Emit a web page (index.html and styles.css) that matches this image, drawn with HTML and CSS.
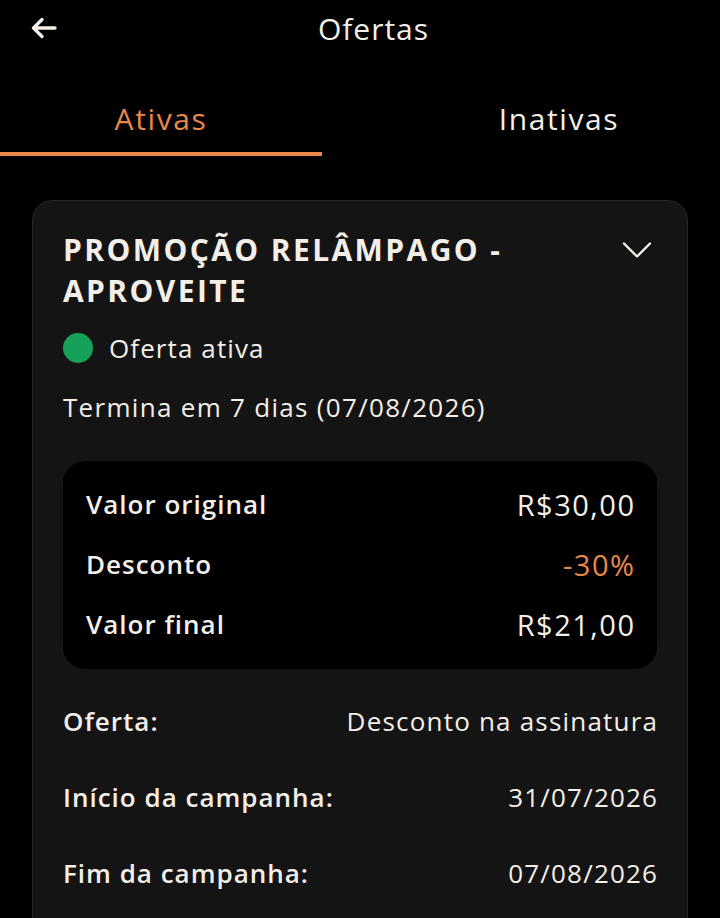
FILE: index.html
```html
<!DOCTYPE html>
<html lang="pt-BR">
<head>
  <meta charset="utf-8">
  <meta name="viewport" content="width=device-width, initial-scale=1.0">
  <title>Ofertas</title>
  <link rel="stylesheet" href="styles.css">
</head>
<body>
  <header class="topbar">
    <button class="back" type="button" aria-label="Voltar">
      <svg width="28" height="22" viewBox="0 0 28 22" fill="none" stroke="currentColor" stroke-width="3.4" stroke-linecap="round" stroke-linejoin="round">
        <path d="M25 11H3.5M12 2.5L3.5 11l8.5 8.5"/>
      </svg>
    </button>
    <h1 class="title">Ofertas</h1>
    <span></span>
  </header>

  <nav class="tabs">
    <button class="tab active" type="button">Ativas</button>
    <button class="tab" type="button">Inativas</button>
  </nav>

  <section class="card">
    <div class="card-head">
      <h2 class="offer-name">PROMOÇÃO RELÂMPAGO - APROVEITE</h2>
      <svg class="chevron" width="30" height="18" viewBox="0 0 30 18" fill="none" stroke="currentColor" stroke-width="2.4" stroke-linecap="round" stroke-linejoin="round">
        <path d="M2 2.5l13 13 13-13"/>
      </svg>
    </div>

    <div class="status">
      <span class="dot"></span>
      <span>Oferta ativa</span>
    </div>

    <p class="ends">Termina em 7 dias (07/08/2026)</p>

    <div class="prices">
      <div class="price-row">
        <span class="label">Valor original</span>
        <span class="value">R$30,00</span>
      </div>
      <div class="price-row">
        <span class="label">Desconto</span>
        <span class="value discount">-30%</span>
      </div>
      <div class="price-row">
        <span class="label">Valor final</span>
        <span class="value">R$21,00</span>
      </div>
    </div>

    <div class="details">
      <div class="detail-row">
        <span class="label">Oferta:</span>
        <span class="value">Desconto na assinatura</span>
      </div>
      <div class="detail-row">
        <span class="label">Início da campanha:</span>
        <span class="value">31/07/2026</span>
      </div>
      <div class="detail-row">
        <span class="label">Fim da campanha:</span>
        <span class="value">07/08/2026</span>
      </div>
    </div>
  </section>
</body>
</html>
```

FILE: styles.css
```css
* { box-sizing: border-box; }

body {
  margin: 0;
  background-color: #000;
  color: #f3efe8;
  font-family: "Open Sans", "Noto Sans", sans-serif;
  overflow: hidden;
}

button {
  background: none;
  border: 0;
  padding: 0;
  color: inherit;
  font: inherit;
  cursor: pointer;
}

/* header */
.topbar {
  display: grid;
  grid-template-columns: 1fr auto 1fr;
  align-items: center;
  height: 56px;
  padding: 0 30px;
}

.back {
  display: flex;
  justify-self: start;
}

.title {
  margin: 0 0 0 27px;
  font-size: 30px;
  font-weight: 400;
  letter-spacing: 1px;
}

/* tabs */
.tabs {
  display: flex;
  justify-content: space-between;
  margin-top: 28px;
}

.tab {
  width: 322px;
  height: 72px;
  padding-top: 0;
  border-bottom: 4px solid transparent;
  font-size: 30px;
  font-weight: 500;
  letter-spacing: 1.6px;
}

.tab.active {
  color: #e8894b;
  border-bottom-color: #e8894b;
}

/* card */
.card {
  margin: 44px 32px 0;
  padding: 28px 30px 40px;
  background-color: #141414;
  border: 1px solid #262626;
  border-radius: 20px;
  min-height: 760px;
}

.card-head {
  display: flex;
  justify-content: space-between;
  align-items: flex-start;
}

.offer-name {
  margin: 0;
  max-width: 490px;
  font-size: 30px;
  font-weight: 700;
  line-height: 41px;
  letter-spacing: 2.4px;
}

.chevron {
  margin: 12px 5px 0 0;
  flex-shrink: 0;
}

.status {
  display: flex;
  align-items: center;
  gap: 16px;
  height: 30px;
  margin-top: 22px;
  font-size: 26px;
  letter-spacing: 1.1px;
}

.dot {
  width: 30px;
  height: 30px;
  border-radius: 50%;
  background-color: #17a05a;
}

.ends {
  margin: 26px 0 0;
  font-size: 26px;
  line-height: 36px;
  letter-spacing: 1.3px;
}

/* prices box */
.prices {
  margin-top: 36px;
  padding: 13px 23px 15px;
  background-color: #000;
  border-radius: 22px;
}

.price-row,
.detail-row {
  display: flex;
  justify-content: space-between;
  align-items: center;
  height: 60px;
}

.label {
  font-size: 26px;
  font-weight: 600;
  letter-spacing: 1px;
}

.value {
  margin-right: -1.2px;
}

.price-row .value {
  font-size: 29px;
  letter-spacing: 1.5px;
  margin-right: -1.5px;
}

.discount {
  color: #e8894b;
}

/* details */
.details {
  margin-top: 14px;
}

.detail-row {
  height: 76px;
}

.detail-row .value {
  font-size: 26px;
  letter-spacing: 1.2px;
}
```
